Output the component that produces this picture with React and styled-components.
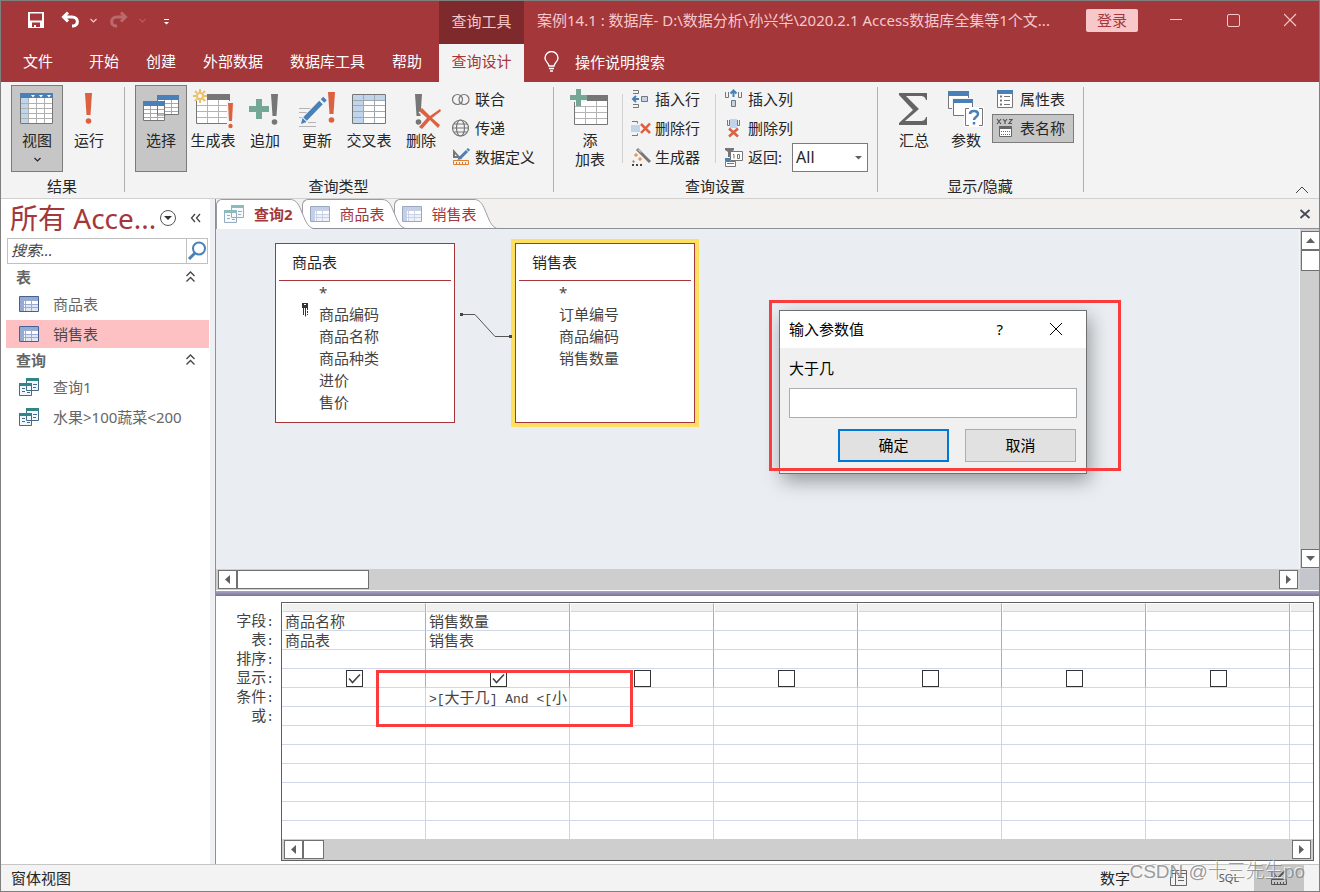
import React, { useState } from 'react';
import styled, { createGlobalStyle, ThemeProvider } from 'styled-components';

const theme = {
  colours: {
    brand: '#a4373a',
    brandDark: '#7e2a2d',
    blush: '#f8c7ca',
    ribbon: '#f3f3f3',
    canvas: '#eaeef2',
    pressed: '#c6c6c6',
    outline: '#7b7b7b',
    ink: '#262626',
    muted: '#666666',
    mark: '#fb3c3c',
  },
};

const GlobalStyle = createGlobalStyle`
  * {
    box-sizing: border-box;
  }

  body {
    margin: 0;
    font-family: 'Noto Sans', 'Noto Sans CJK SC', sans-serif;
    font-size: 15px;
    line-height: 20px;
    color: #262626;
  }

  button, input, select {
    font: inherit;
    color: inherit;
    margin: 0;
    padding: 0;
    border-radius: 0;
  }

  button {
    border: 0;
    background: none;
    white-space: nowrap;
  }

  svg {
    display: block;
    flex: none;
  }

  ul {
    list-style: none;
    margin: 0;
    padding: 0;
  }
`;

const Window = styled.div`
  display: flex;
  flex-direction: column;
  min-height: 100vh;
  border: 1px solid #808080;
  background: #fff;
`;

/* ---------- title bar and menu ---------- */

const TitleBar = styled.header`
  display: flex;
  align-items: center;
  height: 43px;
  padding-bottom: 5px;
  background: ${(props) => props.theme.colours.brand};
  color: ${(props) => props.theme.colours.blush};
`;

const QuickAccess = styled.div`
  display: flex;
  align-items: center;
  gap: 10px;
  flex: none;
  width: 438px;
  padding-left: 26px;
`;

const QuickPair = styled.div`
  display: flex;
  align-items: center;
  gap: 8px;
  opacity: ${(props) => (props.$faded ? 0.25 : 1)};
`;

const ContextCap = styled.div`
  flex: none;
  width: 85px;
  height: 43px;
  margin-bottom: -5px;
  line-height: 40px;
  text-align: center;
  background: ${(props) => props.theme.colours.brandDark};
`;

const Title = styled.h1`
  flex: 1;
  min-width: 0;
  margin: 0;
  padding-left: 13px;
  font-size: 15px;
  font-weight: 400;
  white-space: nowrap;
  overflow: hidden;
`;

const LoginButton = styled.button`
  width: 52px;
  height: 23px;
  margin: 0 10px 0 26px;
  border-radius: 2px;
  background: ${(props) => props.theme.colours.blush};
  color: ${(props) => props.theme.colours.brand};
`;

const WindowButton = styled.button`
  display: flex;
  justify-content: center;
  width: 57px;
`;

const MenuBar = styled.nav`
  display: flex;
  height: 38px;
  background: ${(props) => props.theme.colours.brand};
  color: #fff;
`;

const MenuItems = styled.div`
  display: flex;
  gap: 1px;
  flex: none;
  width: 438px;
`;

const MenuButton = styled.button`
  padding: 0 ${(props) => (props.$wide ? 22 : 13)}px 4px;
`;

const ActiveTab = styled.button`
  width: 85px;
  padding-bottom: 4px;
  background: ${(props) => props.theme.colours.ribbon};
  color: ${(props) => props.theme.colours.brand};
`;

const TellMe = styled.button`
  display: flex;
  align-items: center;
  gap: 13px;
  padding: 0 0 2px 18px;
`;

/* ---------- ribbon ---------- */

const Ribbon = styled.div`
  display: flex;
  height: 117px;
  border-bottom: 1px solid #d2d0ce;
  background: ${(props) => props.theme.colours.ribbon};
`;

const Group = styled.section`
  display: flex;
  flex-direction: column;
  padding: 3px 9px 0 10px;
`;

const GroupBody = styled.div`
  display: flex;
  height: 87px;
`;

const GroupName = styled.div`
  margin: 4px 2px 0 0;
  text-align: center;
`;

const GroupLine = styled.div`
  width: 1px;
  margin: 5px 0 6px;
  background: #b1b1b1;
`;

const InnerLine = styled.div`
  width: 1px;
  margin: 9px 4px 9px 6px;
  background: #d0d0d0;
`;

const BigButton = styled.button`
  display: flex;
  flex-direction: column;
  align-items: center;
  width: 52px;
  height: 87px;
  padding-top: 3px;
  border: 1px solid ${(props) => (props.$pressed ? props.theme.colours.outline : 'transparent')};
  background: ${(props) => (props.$pressed ? props.theme.colours.pressed : 'transparent')};
  line-height: 19px;
  white-space: pre;

  > svg:first-child {
    margin-bottom: 2px;
  }

  > svg + svg {
    margin-top: 7px;
  }
`;

const SmallColumn = styled.div`
  display: flex;
  flex-direction: column;
  align-items: flex-start;
`;

const SmallButton = styled.button`
  display: flex;
  align-items: center;
  gap: 4px;
  height: 29px;
  padding: 0 8px 2px 3px;
  border: 1px solid ${(props) => (props.$pressed ? props.theme.colours.outline : 'transparent')};
  background: ${(props) => (props.$pressed ? props.theme.colours.pressed : 'transparent')};
`;

const ReturnRow = styled.div`
  display: flex;
  align-items: center;
  height: 29px;
  padding-left: 4px;
`;

const ReturnLabel = styled.label`
  display: flex;
  align-items: center;
  gap: 4px;
  width: 68px;
  padding-bottom: 2px;
  white-space: nowrap;
`;

const SelectBox = styled.div`
  display: grid;
  align-items: center;
  width: 76px;

  > * {
    grid-area: 1 / 1;
  }

  > svg {
    justify-self: end;
    margin-right: 5px;
    pointer-events: none;
  }
`;

const Select = styled.select`
  width: 100%;
  height: 29px;
  padding: 0 0 2px 3px;
  border: 1px solid ${(props) => props.theme.colours.outline};
  background: #fff;
  font-size: 16px;
  appearance: none;
`;

const CollapseButton = styled.button`
  align-self: flex-end;
  margin: 0 10px 4px auto;
`;

/* ---------- navigation pane ---------- */

const Workspace = styled.main`
  display: flex;
  flex: 1;
`;

const NavPane = styled.aside`
  flex: none;
  width: 209px;
  color: ${(props) => props.theme.colours.muted};
`;

const NavHeader = styled.div`
  display: flex;
  align-items: center;
  height: 38px;
  padding: 0 9px;
`;

const NavTitle = styled.h2`
  flex: 1;
  margin: 0;
  font-size: 28px;
  line-height: 36px;
  font-weight: 400;
  white-space: nowrap;
  color: ${(props) => props.theme.colours.brand};
`;

const NavHeaderButton = styled.button`
  margin-left: ${(props) => (props.$apart ? 13 : 0)}px;
`;

const SearchBox = styled.form`
  display: flex;
  height: 26px;
  margin: 1px 2px 1px 6px;
  border: 1px solid #c0c0c0;
`;

const SearchInput = styled.input`
  flex: 1;
  min-width: 0;
  padding: 0 0 2px 3px;
  border: 0;
  background: #fff;

  &::placeholder {
    font-style: italic;
    color: #444;
    opacity: 1;
  }
`;

const SearchButton = styled.button`
  width: 21px;
  border-left: 1px solid #c0c0c0;
`;

const SectionHead = styled.h3`
  display: flex;
  align-items: center;
  justify-content: space-between;
  height: 25px;
  margin: 0;
  padding: 0 14px 1px 15px;
  font-size: 15px;
  font-weight: 700;
`;

const NavList = styled.ul`
  display: grid;
  gap: 2px;
  padding: 0 1px 0 5px;
`;

const NavLink = styled.a`
  display: flex;
  align-items: center;
  gap: 14px;
  height: 28px;
  padding-left: 13px;
  color: ${(props) => (props.$selected ? '#4a4a4a' : 'inherit')};
  background: ${(props) => (props.$selected ? '#fdc1c4' : 'transparent')};
  text-decoration: none;
  white-space: nowrap;
`;

const PaneSplitter = styled.div`
  flex: none;
  width: 6px;
  border-right: 1px solid #8f909a;
  background: #eff0f3;
`;

/* ---------- document area ---------- */

const Document = styled.div`
  display: flex;
  flex-direction: column;
  flex: 1;
  min-width: 0;
`;

const TabStrip = styled.div`
  display: flex;
  height: 30px;
  border-bottom: 1px solid #8f8f97;
  background: #f3f1f0;
`;

const DocTab = styled.button`
  position: relative;
  z-index: ${(props) => props.$order};
  display: flex;
  height: 30px;
  margin-right: -11px;
  color: ${(props) => props.theme.colours.brand};
  font-weight: ${(props) => (props.$current ? 700 : 400)};
`;

const TabBody = styled.span`
  display: flex;
  align-items: center;
  gap: 10px;
  height: ${(props) => (props.$current ? 30 : 29)}px;
  padding: 0 0 ${(props) => (props.$current ? 2 : 0)}px 7px;
  border: 1px solid #9a9aa2;
  border-width: 1px 0 0 1px;
  border-top-left-radius: 6px;
  background: #fff;
`;

const TabLabel = styled.span`
  position: relative;
  z-index: 1;
  margin-right: -4px;
`;

const CloseTab = styled.button`
  margin: 0 8px 0 auto;
`;

const CanvasRow = styled.div`
  display: flex;
  flex: 1;
  min-height: 340px;
`;

const Canvas = styled.div`
  position: relative;
  flex: 1;
  background: ${(props) => props.theme.colours.canvas};
`;

const FieldList = styled.section`
  position: absolute;
  left: ${(props) => props.$x}px;
  top: 14px;
  width: 180px;
  height: 180px;
  padding: 0 3px;
  border: 1px solid ${(props) => props.theme.colours.brand};
  background: #fff;
  color: #444;
  box-shadow: ${(props) => (props.$selected ? '0 0 0 4px #ffdf60' : 'none')};
`;

const FieldListName = styled.h4`
  height: 37px;
  margin: 0;
  padding-left: 13px;
  border-bottom: 1px solid ${(props) => props.theme.colours.brand};
  font-size: 15px;
  font-weight: 400;
  line-height: 37px;
  color: ${(props) => props.theme.colours.ink};
`;

const Field = styled.li`
  display: grid;
  grid-template-columns: 17px 1fr;
  align-items: center;
  height: 22px;
  padding-left: 23px;

  > span {
    grid-column: 2;
    grid-row: 1;
  }

  > svg {
    grid-row: 1;
    align-self: start;
  }
`;

const Relation = styled.svg`
  position: absolute;
  left: 243px;
  top: 82px;
`;

const Dialog = styled.div`
  position: absolute;
  left: 563px;
  top: 81px;
  width: 308px;
  border: 1px solid #6d7073;
  background: #f0f0f0;
  color: #000;
  box-shadow: 3px 7px 18px rgba(0, 0, 0, 0.36);
`;

const DialogTitle = styled.div`
  display: flex;
  align-items: center;
  height: 37px;
  padding: 0 23px 1px 9px;
  background: #fff;

  > span {
    flex: 1;
  }
`;

const DialogButton = styled.button`
  margin-left: ${(props) => (props.$apart ? 46 : 0)}px;
`;

const DialogForm = styled.form`
  display: grid;
  padding: 10px 9px 11px;
`;

const ParamInput = styled.input`
  width: 100%;
  height: 30px;
  margin-top: 10px;
  padding: 0 6px;
  border: 1px solid #abadb3;
  background: #fff;
`;

const DialogActions = styled.div`
  display: flex;
  justify-content: flex-end;
  gap: 16px;
  margin-top: 11px;
  padding-right: 1px;
`;

const PushButton = styled.button`
  width: 111px;
  height: 33px;
  padding-bottom: 2px;
  border: ${(props) => (props.$primary ? '2px solid #0078d7' : '1px solid #adadad')};
  background: #e1e1e1;
`;

const Mark = styled.div`
  position: absolute;
  z-index: 5;
  left: ${(props) => props.$x}px;
  top: ${(props) => props.$y}px;
  width: ${(props) => props.$w}px;
  height: ${(props) => props.$h}px;
  border: 3px solid ${(props) => props.theme.colours.mark};
  pointer-events: none;
`;

/* ---------- scroll bars ---------- */

const Bar = styled.div`
  display: flex;
  flex-direction: ${(props) => (props.$vertical ? 'column' : 'row')};
  flex: ${(props) => (props.$grow ? 1 : 'none')};
  padding: ${(props) => (props.$vertical ? '2px 0 1px 1px' : '1px 2px')};
  border: 0 solid #f4f5f7;
  border-left-width: ${(props) => (props.$vertical ? 1 : 0)}px;
  background: #cecece;
`;

const Arrow = styled.button`
  display: flex;
  align-items: center;
  justify-content: center;
  width: ${(props) => (props.$vertical ? 18 : 19)}px;
  height: 19px;
  margin-left: ${(props) => (props.$end && !props.$vertical ? 'auto' : 0)};
  margin-top: ${(props) => (props.$end && props.$vertical ? 'auto' : 0)};
  border: 1px solid #707070;
  border-right-width: ${(props) => (props.$vertical ? 0 : 1)}px;
  background: #fff;
`;

const Thumb = styled.div`
  width: ${(props) => (props.$vertical ? 18 : props.$size)}px;
  height: ${(props) => (props.$vertical ? props.$size : 19)}px;
  border: 1px solid #707070;
  border-right-width: ${(props) => (props.$vertical ? 0 : 1)}px;
  background: #fff;
`;

const BarRow = styled.div`
  display: flex;
  height: 21px;
`;

const BarCorner = styled.div`
  width: 19px;
  background: #c5c6cb;
`;

const PaneDivider = styled.div`
  height: 5px;
  margin-top: 1px;
  background: linear-gradient(#a9a7c4, #77749b);
`;

/* ---------- design grid ---------- */

const DesignPane = styled.div`
  position: relative;
  display: flex;
  gap: 7px;
  padding: 6px 5px 3px 0;
  font-family: 'Noto Sans CJK SC', sans-serif;
  color: #444;
`;

const RowNames = styled.ul`
  flex: none;
  width: 58px;
  padding-top: 8px;
  text-align: right;
  line-height: 19px;

  > li {
    height: 19px;
  }
`;

const GridFrame = styled.div`
  flex: 1;
  min-width: 0;
  overflow: hidden;
  border: 1px solid #606060;
`;

const Grid = styled.table`
  width: 1152px;
  table-layout: fixed;
  border-collapse: separate;
  border-spacing: 0;
`;

const ColumnTop = styled.th`
  width: 144px;
  height: 9px;
  padding: 0;
  border: 1px solid #fff;
  border-right-color: #aeaeb2;
  border-bottom-color: #d3d5e2;
  background: #f0f0f0;
`;

const Cell = styled.td`
  height: ${(props) => (props.$last ? 18 : 19)}px;
  padding: 0 0 0 3px;
  border: 0 solid #cfd8e6;
  border-right: 1px solid ${(props) => (props.$upper ? '#aeaeb2' : '#d0d4e2')};
  border-bottom-width: ${(props) => (props.$last ? 0 : 1)}px;
  line-height: 17px;
  vertical-align: top;
  white-space: nowrap;
`;

const Latin = styled.span`
  font-family: 'Liberation Mono', monospace;
  font-size: 13px;
  line-height: 1;
`;

const CheckBox = styled.input`
  display: block;
  width: 17px;
  height: 17px;
  margin: 0 auto;
  border: 1px solid #333;
  appearance: none;
  background: #fff;
`;

const CheckWrap = styled.div`
  display: grid;
  justify-items: center;
  padding-top: 1px;
  margin-left: -2px;

  > * {
    grid-area: 1 / 1;
  }

  > svg {
    pointer-events: none;
  }
`;

/* ---------- status bar ---------- */

const StatusBar = styled.footer`
  position: relative;
  display: flex;
  height: 27px;
  padding: 0 15px 0 10px;
  border-top: 1px solid #c6c6c6;
  background: ${(props) => props.theme.colours.ribbon};
  line-height: 26px;
`;

const StatusText = styled.span`
  flex: 1;
`;

const ViewButton = styled.button`
  display: flex;
  align-items: center;
  justify-content: center;
  width: 50px;
  background: ${(props) => (props.$pressed ? '#c5c5c5' : 'transparent')};
  font-size: 11px;
  color: #555;
`;

const NumLock = styled.span`
  margin-right: 24px;
`;

const Watermark = styled.div`
  position: absolute;
  right: 14px;
  top: -7px;
  font-family: 'Liberation Sans', 'Noto Sans CJK SC', sans-serif;
  font-size: 19px;
  line-height: 28px;
  font-weight: 300;
  white-space: nowrap;
  color: rgba(130, 130, 130, 0.8);
  text-shadow: -1px -1px 0 rgba(255, 255, 255, 0.8);
  pointer-events: none;
`;

/* ---------- icons ---------- */

const BLUE = '#4a80b8';
const PALE = '#c0d5ea';
const RED = '#dc6141';
const GREEN = '#74a795';
const GREY = '#767676';

const Big = ({ children }) => (
  <svg width="44" height="40" viewBox="0 0 44 40" fill="none">{children}</svg>
);

const Small = ({ children }) => (
  <svg width="20" height="20" viewBox="0 0 20 20" fill="none">{children}</svg>
);

const Bang = ({ x, y, fill = RED, h = 31 }) => (
  <g fill={fill}>
    <path d={`M${x} ${y}h7l-1.5 ${h - 9}h-4z`} />
    <circle cx={x + 3.5} cy={y + h - 3} r="2.8" />
  </g>
);

const ViewIcon = () => (
  <Big>
    <path fill="#fff" d="M5 4h33v31H5z" />
    <path fill={PALE} d="M6 9h8v25H6z" />
    <path stroke="#b0b0b0" d="M13.5 9v25M21.5 9v25M29.5 9v25M6 14.5h32M6 19.5h32M6 24.5h32M6 29.5h32" />
    <path stroke={GREY} d="M5.5 4.500h32v30h-32z" />
    <path fill={BLUE} d="M5 4h33v5H5z" />
    <path fill="#fff" d="M16 6h4l-2 2.500zM24 6h4l-2 2.500zM32 6h4l-2 2.500z" />
  </Big>
);

const RunIcon = () => (
  <Big><Bang x={18} y={4} /></Big>
);

const MiniTable = ({ x, y }) => (
  <g transform={`translate(${x} ${y})`}>
    <path fill="#fff" stroke={GREY} d="M.5.5h21v19H.5z" />
    <path stroke="#a8a8a8" d="M7.5 5v14M14.500 5v14M1 8.500h20M1 12.500h20M1 16.500h20" />
    <path fill={BLUE} d="M0 0h22v5H0z" />
  </g>
);

const SelectIcon = () => (
  <Big>
    <MiniTable x={18} y={6} />
    <MiniTable x={4} y={12} />
    <path stroke={GREY} d="M18.500 17v9h8" />
  </Big>
);

const GreyTable = ({ x, y, cut }) => (
  <g transform={`translate(${x} ${y})`}>
    <path fill="#fff" stroke={GREY} d="M.5.5h33v29H.5z" />
    <path stroke="#b4b4b4" d="M11.500 6v23M22.500 6v23M1 11.500h32M1 17.500h32M1 23.500h32" />
    <path fill={GREY} d="M0 0h34v6H0z" />
    <path fill="#f3f3f3" d={`M-2 -2h${cut + 2}v9H-2z`} />
  </g>
);

const MakeTableIcon = () => (
  <Big>
    <GreyTable x={5} y={5} cut={11} />
    <g stroke="#edbf68" strokeWidth="2">
      <path d="M9 0v3M9 11v3M2 7h3M13 7h3M4 2l2 2M12 10l2 2M14 2l-2 2M4 12l2-2" />
      <circle cx="9" cy="7" r="3" fill="#fff" />
    </g>
    <path fill="#f3f3f3" d="M36 12h8v28h-8z" />
    <g fill={RED}>
      <path d="M37 14h5l-1 18h-3z" />
      <circle cx="39.500" cy="37" r="2.200" />
    </g>
  </Big>
);

const AppendIcon = () => (
  <Big>
    <path stroke={GREEN} strokeWidth="6" d="M16 10v20M6 20h20" />
    <Bang x={28} y={5} fill={GREY} />
  </Big>
);

const UpdateIcon = () => (
  <Big>
    <path stroke="#b4b4b4" d="M4 19.500h17M4 23.500h13M4 28.500h8M12 33.500h9M4 37.500h17" />
    <path stroke="#f3f3f3" strokeWidth="8" d="M9 32l21-22" />
    <path stroke={BLUE} strokeWidth="5" d="M10 30l16-16.500M27.500 12l2.500-2.500" />
    <path fill={BLUE} d="M6 35l1.500-6 4 4z" />
    <Bang x={33} y={3} />
  </Big>
);

const CrosstabIcon = () => (
  <Big>
    <path fill="#fff" d="M5 5h34v30H5z" />
    <path fill={PALE} d="M6 6h32v5H6zM6 11h10v23H6z" />
    <path stroke="#a0a8b0" d="M16.500 6v28M27.500 6v28M6 11.500h32M6 16.500h32M6 22.500h32M6 28.500h32" />
    <path stroke={GREY} d="M5.500 5.500h33v29h-33z" />
  </Big>
);

const DeleteIcon = () => (
  <Big>
    <Bang x={16} y={5} fill={GREY} />
    <path stroke="#f3f3f3" strokeWidth="7" d="M22 21l18 18M41 22L22 39" />
    <path fill={RED} d="M20 22l3-3 8 8 10-7 1 2-9 7 8 7-2 3-8-8-8 9-3-2 8-9z" />
  </Big>
);

const AddTableIcon = () => (
  <Big>
    <GreyTable x={6} y={6} cut={13} />
    <path fill="#fff" d="M7 18h10v-6h6v5h-6v5H7z" />
    <path stroke={GREY} d="M6.500 17v18" />
    <path stroke="#b4b4b4" d="M7 17.500h16M17.500 18v6" />
    <path stroke={GREEN} strokeWidth="5" d="M10.500 0v17M2 8.500h17" />
  </Big>
);

const SumIcon = () => (
  <Big>
    <path fill="#646464" d="M7 4h28v7h-1c-1-3-2-4-6-4H14l13 13-14 12h15c4 0 5-1 6-4h1v8H7v-2l14-13L7 6z" />
  </Big>
);

const ParamIcon = () => (
  <Big>
    <path fill="#fff" stroke={GREY} d="M4.500 2.500h20v17h-20z" />
    <path fill={BLUE} d="M4 2h21v5H4z" />
    <path fill="#f3f3f3" d="M8 9h22v19H8z" />
    <path fill="#fff" stroke={GREY} d="M9.500 10.500h19v16h-19z" />
    <path fill={BLUE} d="M9 10h20v4H9z" />
    <path fill="#fff" d="M20 18h20v20H20z" />
    <path stroke={GREY} d="M25 19.500h-3.500v17H25M35 19.500h3.500v17H35" />
    <path stroke={BLUE} strokeWidth="2.500" d="M26 25c0-4 8-4 8 0 0 3-4 3-4 6M30 33v2.500" />
  </Big>
);

const UnionIcon = () => (
  <Small>
    <g stroke={GREY} strokeWidth="1.200">
      <circle cx="6.500" cy="10.500" r="5" />
      <circle cx="13" cy="10.500" r="5" />
    </g>
  </Small>
);

const GlobeIcon = () => (
  <Small>
    <g stroke={GREY} strokeWidth="1.200">
      <circle cx="9.500" cy="10" r="8" />
      <ellipse cx="9.500" cy="10" rx="4" ry="8" />
      <path d="M1.500 10h16M3 6h13M3 14h13" />
    </g>
  </Small>
);

const DefineIcon = () => (
  <Small>
    <path fill={GREY} fillRule="evenodd" d="M2 2l8 9H2zM4 7v2h2z" />
    <path stroke={BLUE} strokeWidth="3" d="M9 11l7-7M16.500 3.500L18 2" />
    <path fill={BLUE} d="M6.500 13l1.500-4 3 3z" />
    <path stroke="#e07f2e" d="M2.500 13.500h15v4h-15zM5.500 15v2M8.500 15v2M11.500 15v2M14.500 15v2" />
  </Small>
);

const InsertRowIcon = () => (
  <Small>
    <path stroke={GREY} d="M2 1.500h5.500v3H2M2 18.500h5.500v-3H2" />
    <path fill={PALE} stroke={GREY} d="M10.500 7.500h6v5h-6z" />
    <path stroke={BLUE} strokeWidth="2" d="M2 10h6M5 7l-3 3 3 3" />
  </Small>
);

const DeleteRowIcon = () => (
  <Small>
    <path stroke={GREY} d="M1 3.500h5.500v2M1 17.500h5.500v-2" />
    <path fill={PALE} d="M0 7h9v7H0z" />
    <path stroke={RED} strokeWidth="2.500" d="M10 6l9 9M19 5.500L10 15" />
  </Small>
);

const WandIcon = () => (
  <Small>
    <path stroke={GREY} strokeWidth="3" d="M6 2l13 13" />
    <path stroke="#fff" d="M7 2.500l3 3" />
    <path fill="#e07f2e" d="M5 6l2 2-2 2-2-2zM9 10l2 2-2 2-2-2zM2.500 13l1.500 1.500L2.500 16 1 14.500z" />
    <path fill="#f3f3f3" d="M5 7.300l.7.7-.7.700-.7-.7zM9 11.300l.7.7-.7.700-.7-.7z" />
    <path stroke="#444" strokeWidth="2" strokeDasharray="2 2" d="M1 18h10" />
  </Small>
);

const InsertColumnIcon = () => (
  <Small>
    <path stroke={GREY} d="M1.500 3v5.500h3V3M14.500 3v5.500h3V3" />
    <path fill={PALE} stroke={GREY} d="M7.500 11.500h4v6h-4z" />
    <path stroke={BLUE} strokeWidth="2" d="M9.500 1v7M6.500 4.500l3-3 3 3" />
  </Small>
);

const DeleteColumnIcon = () => (
  <Small>
    <path fill={PALE} d="M6 1h7v9H6z" />
    <path stroke={GREY} d="M3.500 2v5.500h2V2M13.500 2v5.500h2V2" />
    <path stroke={RED} strokeWidth="2.500" d="M5 10.500l9 8M14 10.500l-9 8" />
  </Small>
);

const ReturnIcon = () => (
  <Small>
    <path fill={GREY} d="M1 1h9v2L7 5v5H4V5L1 3z" />
    <path fill={BLUE} d="M1 11h5v3H1z" />
    <path fill="#fff" stroke={GREY} d="M1.500 14.500h10v5h-10zM6.500 4.500h12v9h-12z" />
    <path stroke={GREY} d="M3 16.500h7M9 7.500h1v4M13.500 7.500h2v4h-2z" />
  </Small>
);

const PropertyIcon = () => (
  <Small>
    <path fill="#fff" stroke={GREY} d="M1.500 1.500h15v17h-15z" />
    <path fill={BLUE} d="M1 1h16v4H1z" />
    <path stroke={GREY} d="M8 7.500h6M8 11.500h6M8 15.500h6" />
    <path stroke={GREY} strokeWidth="2" d="M4 7.500h2M4 11.500h2M4 15.500h2" />
  </Small>
);

const TableNamesIcon = () => (
  <Small>
    <path stroke="#555" strokeWidth="1.200" d="M1 1l4 5M5 1L1 6M7 1l2 2.500L11 1M9 3.500V6M13 1.500h3L13 5.500h3" />
    <path fill="#fff" stroke="#666" d="M3.500 8.500h12v10h-12z" />
    <path fill="#666" d="M3 8h13v3H3z" />
    <path stroke="#666" strokeDasharray="1 1" d="M5 13.500h9M5 16.500h9" />
  </Small>
);

const Chevron = () => (
  <svg width="9" height="5" viewBox="0 0 9 5" fill="none" stroke="currentColor" strokeWidth="1.200">
    <path d="M1.500 1l3 3 3-3" />
  </svg>
);

const DoubleChevron = ({ left }) => (
  <svg width="11" height="12" viewBox="0 0 11 12" fill="none" stroke="#444" strokeWidth="1.300">
    <path d={left ? 'M5 2L1.500 6 5 10M10 2L6.500 6 10 10' : 'M1.500 5l4-4 4 4M1.500 10.500l4-4 4 4'} />
  </svg>
);

const Triangle = ({ d }) => (
  <svg width="9" height="9" viewBox="0 0 9 9" fill="#606060">
    <path d={d} />
  </svg>
);

const LEFT = 'M7 0v9L2 4.500z';
const RIGHT = 'M2 0v9l5-4.500z';
const UP = 'M0 7h9L4.500 2z';
const DOWN = 'M0 2h9L4.500 7z';

const TableGlyph = ({ faded }) => (
  <svg width="20" height="16" viewBox="0 0 20 16" fill="none" opacity={faded ? 0.55 : 1}>
    <path fill="#fff" d="M0 0h20v16H0z" />
    <path fill="#dfe6f5" d="M7 9h12v6H7z" />
    <path fill="#93a9d6" d="M1 1h18v3H1zM1 4h4v11H1z" />
    <path stroke="#9cacd0" d="M6.500 1v14M12.500 1v14M1 4.500h18M1 8.500h18M1 11.500h18" />
    <path stroke="#48608f" d="M.5.5h19v15H.5z" />
  </svg>
);

const QueryGlyph = ({ faded }) => (
  <svg width="20" height="18" viewBox="0 0 20 18" fill="none" opacity={faded ? 0.55 : 1}>
    <path fill="#f2f7fc" stroke="#45698c" d="M7.500.5h12v12h-12z" />
    <path fill="#2f8587" d="M7 0h13v3H7z" />
    <path fill="#f2f7fc" stroke="#45698c" d="M.5 5.500h12v12H.5z" />
    <path fill="#2f8587" d="M0 5h13v3H0z" />
    <path stroke="#45698c" d="M7.500 8v4.500h5M3 10.500h3M3 13.500h3M8 14.500h3M14 6.500h4M14 9.500h3" />
  </svg>
);

const KeyGlyph = () => (
  <svg width="8" height="14" viewBox="0 0 8 14" fill="#333">
    <path fillRule="evenodd" d="M0 0h6v5H4v9L3 13V5H0zM2 1v1h2V1z" />
    <path d="M5 5h1v2H5zM5 8h1v2H5zM5 11h1v1H5zM1 5h1v7H1z" />
  </svg>
);

const TabSlope = ({ current }) => (
  <svg width="24" height="30" viewBox="0 0 24 30" fill="none">
    <path fill="#fff" d={`M0 0h1c7 0 9 6 12 13s6 14 11 16v${current ? 1 : 0}H0z`} />
    <path stroke="#9a9aa2" d="M0 .5h1c7 0 9 6 12 13s5 14 11 16" />
  </svg>
);

/* ---------- data ---------- */

const menuItems = ['开始', '创建', '外部数据', '数据库工具', '帮助'];

const queryTypes = [
  { name: '选择', Icon: SelectIcon, pressed: true },
  { name: '生成表', Icon: MakeTableIcon },
  { name: '追加', Icon: AppendIcon },
  { name: '更新', Icon: UpdateIcon },
  { name: '交叉表', Icon: CrosstabIcon },
  { name: '删除', Icon: DeleteIcon },
];

const sqlTypes = [
  { name: '联合', Icon: UnionIcon },
  { name: '传递', Icon: GlobeIcon },
  { name: '数据定义', Icon: DefineIcon },
];

const rowTools = [
  { name: '插入行', Icon: InsertRowIcon },
  { name: '删除行', Icon: DeleteRowIcon },
  { name: '生成器', Icon: WandIcon },
];

const columnTools = [
  { name: '插入列', Icon: InsertColumnIcon },
  { name: '删除列', Icon: DeleteColumnIcon },
];

const showTools = [
  { name: '属性表', Icon: PropertyIcon },
  { name: '表名称', Icon: TableNamesIcon, pressed: true },
];

const navSections = [
  { name: '表', Glyph: TableGlyph, items: ['商品表', '销售表'] },
  { name: '查询', Glyph: QueryGlyph, items: ['查询1', '水果>100蔬菜<200'] },
];

const docTabs = [
  { name: '查询2', Glyph: QueryGlyph },
  { name: '商品表', Glyph: TableGlyph },
  { name: '销售表', Glyph: TableGlyph },
];

const sources = [
  { name: '商品表', x: 59, key: '商品编码', fields: ['*', '商品编码', '商品名称', '商品种类', '进价', '售价'] },
  { name: '销售表', x: 299, selected: true, fields: ['*', '订单编号', '商品编码', '销售数量'] },
];

const rowNames = ['字段:', '表:', '排序:', '显示:', '条件:', '或:'];

const gridColumns = [
  { 0: '商品名称', 1: '商品表' },
  { 0: '销售数量', 1: '销售表', 4: '>[大于几] And <[小' },
  {}, {}, {}, {}, {}, {},
];

const SHOW_ROW = 3;
const ROW_COUNT = 12;

const splitScripts = (text) =>
  text.split(/([\x20-\x7e]+)/).map((part, i) => (i % 2 ? <Latin key={i}>{part}</Latin> : part));

/* ---------- parts ---------- */

const ToolColumn = ({ tools, children }) => (
  <SmallColumn>
    {tools.map(({ name, Icon, pressed }) => (
      <SmallButton key={name} type="button" $pressed={pressed}>
        <Icon />
        {name}
      </SmallButton>
    ))}
    {children}
  </SmallColumn>
);

const RibbonGroup = ({ name, children }) => (
  <>
    <Group>
      <GroupBody>{children}</GroupBody>
      <GroupName>{name}</GroupName>
    </Group>
    <GroupLine />
  </>
);

const Header = () => (
  <>
    <TitleBar>
      <QuickAccess>
        <button type="button" aria-label="保存">
          <svg width="22" height="18" viewBox="0 0 22 18" fill="none">
            <path fill="#fff" fillRule="evenodd" d="M1 1h16v16H1zM3 2.500v7h12v-7zM5 11.500V16h2v-2h2v2h4v-4.500z" />
          </svg>
        </button>
        <QuickPair>
          <svg width="22" height="18" viewBox="0 0 22 18" fill="none" stroke="#fff" strokeWidth="3">
            <path d="M9 1.500L4.500 6 9 10.500M5 6h8c7 0 7 9 1 9h-1" />
          </svg>
          <Chevron />
        </QuickPair>
        <QuickPair $faded>
          <svg width="22" height="18" viewBox="0 0 22 18" fill="none" stroke="#fff" strokeWidth="3">
            <path d="M13 1.500L17.500 6 13 10.500M17 6H9c-7 0-7 9-1 9h1" />
          </svg>
          <Chevron />
        </QuickPair>
        <svg width="20" height="12" viewBox="0 0 20 12" fill="#fff">
          <path d="M7 5h5v1H7zM7 8h5L9.500 10.500z" />
        </svg>
      </QuickAccess>
      <ContextCap>查询工具</ContextCap>
      <Title>案例14.1 : 数据库- D:\数据分析\孙兴华\2020.2.1 Access数据库全集等1个文...</Title>
      <LoginButton type="button">登录</LoginButton>
      <WindowButton type="button" aria-label="最小化">
        <svg width="14" height="14" stroke="#f8c7ca"><path d="M0 6.500h12" /></svg>
      </WindowButton>
      <WindowButton type="button" aria-label="最大化">
        <svg width="14" height="14" fill="none" stroke="#f8c7ca"><rect x=".5" y="1.500" width="12" height="12" rx="1.500" /></svg>
      </WindowButton>
      <WindowButton type="button" aria-label="关闭">
        <svg width="14" height="14" stroke="#f8c7ca" strokeWidth="1.200"><path d="M0 1l12 12M12 1L0 13" /></svg>
      </WindowButton>
    </TitleBar>
    <MenuBar>
      <MenuItems>
        <MenuButton type="button" $wide>文件</MenuButton>
        {menuItems.map((item) => (
          <MenuButton key={item} type="button">{item}</MenuButton>
        ))}
      </MenuItems>
      <ActiveTab type="button">查询设计</ActiveTab>
      <TellMe type="button">
        <svg width="20" height="22" viewBox="0 0 20 22" fill="none" stroke="#fff" strokeWidth="1.400">
          <path d="M7 15c0-3-4-4-4-8a6.500 6.500 0 0 1 13 0c0 4-4 5-4 8zM7 17.500h5M8 20h3" />
        </svg>
        操作说明搜索
      </TellMe>
    </MenuBar>
  </>
);

const RibbonBar = () => (
  <Ribbon>
    <RibbonGroup name="结果">
      <BigButton type="button" $pressed>
        <ViewIcon />
        视图
        <Chevron />
      </BigButton>
      <BigButton type="button">
        <RunIcon />
        运行
      </BigButton>
    </RibbonGroup>
    <RibbonGroup name="查询类型">
      {queryTypes.map(({ name, Icon, pressed }) => (
        <BigButton key={name} type="button" $pressed={pressed}>
          <Icon />
          {name}
        </BigButton>
      ))}
      <ToolColumn tools={sqlTypes} />
    </RibbonGroup>
    <RibbonGroup name="查询设置">
      <BigButton type="button">
        <AddTableIcon />
        {'添\n加表'}
      </BigButton>
      <InnerLine />
      <ToolColumn tools={rowTools} />
      <InnerLine />
      <ToolColumn tools={columnTools}>
        <ReturnRow>
          <ReturnLabel htmlFor="return-rows">
            <ReturnIcon />
            返回:
          </ReturnLabel>
          <SelectBox>
            <Select id="return-rows" defaultValue="All">
              <option>All</option>
              <option>5</option>
              <option>25</option>
              <option>100</option>
            </Select>
            <svg width="8" height="4" fill="#606060"><path d="M0 0h7L3.500 3.500z" /></svg>
          </SelectBox>
        </ReturnRow>
      </ToolColumn>
    </RibbonGroup>
    <RibbonGroup name="显示/隐藏">
      <BigButton type="button">
        <SumIcon />
        汇总
      </BigButton>
      <BigButton type="button">
        <ParamIcon />
        参数
      </BigButton>
      <ToolColumn tools={showTools} />
    </RibbonGroup>
    <CollapseButton type="button" aria-label="折叠功能区">
      <svg width="14" height="8" fill="none" stroke="#444">
        <path d="M1 7l6-6 6 6" />
      </svg>
    </CollapseButton>
  </Ribbon>
);

const Navigation = () => (
  <NavPane>
    <NavHeader>
      <NavTitle>所有 Acce...</NavTitle>
      <NavHeaderButton type="button" aria-label="筛选">
        <svg width="18" height="18" viewBox="0 0 18 18" fill="none">
          <circle cx="9" cy="9" r="7.500" stroke="#555" />
          <path fill="#333" d="M5 7h8l-4 4z" />
        </svg>
      </NavHeaderButton>
      <NavHeaderButton type="button" aria-label="收起" $apart>
        <DoubleChevron left />
      </NavHeaderButton>
    </NavHeader>
    <SearchBox>
      <SearchInput type="search" placeholder="搜索..." aria-label="搜索" />
      <SearchButton type="button" aria-label="开始搜索">
        <svg width="20" height="22" viewBox="0 0 20 22" fill="none" stroke={BLUE}>
          <circle cx="12" cy="8.500" r="6" strokeWidth="2" />
          <path strokeWidth="3" d="M8 13l-6 6" />
        </svg>
      </SearchButton>
    </SearchBox>
    {navSections.map(({ name, Glyph, items }) => (
      <React.Fragment key={name}>
        <SectionHead>
          {name}
          <DoubleChevron />
        </SectionHead>
        <NavList>
          {items.map((item) => (
            <li key={item}>
              <NavLink href="#" $selected={item === '销售表'}>
                <Glyph />
                {item}
              </NavLink>
            </li>
          ))}
        </NavList>
      </React.Fragment>
    ))}
  </NavPane>
);

const ParameterDialog = () => (
  <Dialog role="dialog" aria-label="输入参数值">
    <DialogTitle>
      <span>输入参数值</span>
      <DialogButton type="button" aria-label="帮助">?</DialogButton>
      <DialogButton type="button" aria-label="关闭" $apart>
        <svg width="14" height="14" stroke="#000"><path d="M1 1l12 12M13 1L1 13" /></svg>
      </DialogButton>
    </DialogTitle>
    <DialogForm>
      <label htmlFor="param">大于几</label>
      <ParamInput id="param" type="text" />
      <DialogActions>
        <PushButton type="button" $primary>确定</PushButton>
        <PushButton type="button">取消</PushButton>
      </DialogActions>
    </DialogForm>
  </Dialog>
);

const RelationCanvas = () => (
  <Canvas>
    {sources.map(({ name, x, key, selected, fields }) => (
      <FieldList key={name} $x={x} $selected={selected}>
        <FieldListName>{name}</FieldListName>
        <ul>
          {fields.map((field) => (
            <Field key={field}>
              {field === key && <KeyGlyph />}
              <span>{field}</span>
            </Field>
          ))}
        </ul>
      </FieldList>
    ))}
    <Relation width="54" height="32" fill="none">
      <path stroke="#555" d="M2 3.500h14l20 22h16" />
      <path fill="#444" d="M1 2h3v3H1zM50 24h3v3h-3z" />
    </Relation>
    <ParameterDialog />
    <Mark $x={553} $y={71} $w={352} $h={171} />
  </Canvas>
);

const DesignGrid = () => {
  const [shown, setShown] = useState([true, true, false, false, false, false, false, false]);

  const toggle = (index) => {
    setShown(shown.map((value, i) => (i === index ? !value : value)));
  };

  return (
    <DesignPane>
      <RowNames>
        {rowNames.map((name) => (
          <li key={name}>{splitScripts(name)}</li>
        ))}
      </RowNames>
      <GridFrame>
        <Grid>
          <thead>
            <tr>
              {gridColumns.map((column, i) => (
                <ColumnTop key={i} />
              ))}
            </tr>
          </thead>
          <tbody>
            {Array.from({ length: ROW_COUNT }, (_, row) => (
              <tr key={row}>
                {gridColumns.map((column, i) => (
                  <Cell key={i} $upper={row <= SHOW_ROW} $last={row === ROW_COUNT - 1}>
                    {row === SHOW_ROW && i < 7 && (
                      <CheckWrap>
                        <CheckBox
                          type="checkbox"
                          aria-label={`显示 ${i + 1}`}
                          checked={shown[i]}
                          onChange={() => toggle(i)}
                        />
                        {shown[i] && (
                          <svg width="17" height="17" fill="none" stroke="#444" strokeWidth="1.600">
                            <path d="M3 8.500l3.500 4 7.500-8" />
                          </svg>
                        )}
                      </CheckWrap>
                    )}
                    {column[row] && splitScripts(column[row])}
                  </Cell>
                ))}
              </tr>
            ))}
          </tbody>
        </Grid>
        <Bar>
          <Arrow type="button" aria-label="向左"><Triangle d={LEFT} /></Arrow>
          <Thumb $size={21} />
          <Arrow type="button" aria-label="向右" $end><Triangle d={RIGHT} /></Arrow>
        </Bar>
      </GridFrame>
      <Mark $x={160} $y={74} $w={257} $h={57} />
    </DesignPane>
  );
};

const App = () => (
  <ThemeProvider theme={theme}>
    <GlobalStyle />
    <Window>
      <Header />
      <RibbonBar />
      <Workspace>
        <Navigation />
        <PaneSplitter />
        <Document>
          <TabStrip>
            {docTabs.map(({ name, Glyph }, i) => (
              <DocTab key={name} type="button" $order={3 - i} $current={i === 0}>
                <TabBody $current={i === 0}>
                  <Glyph faded />
                  <TabLabel>{name}</TabLabel>
                </TabBody>
                <TabSlope current={i === 0} />
              </DocTab>
            ))}
            <CloseTab type="button" aria-label="关闭">
              <svg width="12" height="10" stroke="#444b55" strokeWidth="1.800">
                <path d="M1.500 1l9 8M10.500 1l-9 8" />
              </svg>
            </CloseTab>
          </TabStrip>
          <CanvasRow>
            <RelationCanvas />
            <Bar $vertical>
              <Arrow type="button" aria-label="向上" $vertical><Triangle d={UP} /></Arrow>
              <Thumb $vertical $size={21} />
              <Arrow type="button" aria-label="向下" $vertical $end><Triangle d={DOWN} /></Arrow>
            </Bar>
          </CanvasRow>
          <BarRow>
            <Bar $grow>
              <Arrow type="button" aria-label="向左"><Triangle d={LEFT} /></Arrow>
              <Thumb $size={132} />
              <Arrow type="button" aria-label="向右" $end><Triangle d={RIGHT} /></Arrow>
            </Bar>
            <BarCorner />
          </BarRow>
          <PaneDivider />
          <DesignGrid />
        </Document>
      </Workspace>
      <StatusBar>
        <StatusText>窗体视图</StatusText>
        <NumLock>数字</NumLock>
        <ViewButton type="button" aria-label="数据表视图">
          <svg width="18" height="16" fill="none" stroke="#666">
            <path d="M.5.5h16v15H.5zM5.500 1v14M1 3.500h15M8 7.500h6M8 10.500h6" />
          </svg>
        </ViewButton>
        <ViewButton type="button">SQL</ViewButton>
        <ViewButton type="button" aria-label="设计视图" $pressed>
          <svg width="18" height="16" fill="none" stroke="#555">
            <path d="M1.500 9.500h15v5h-15zM4.500 12v2M7.500 12v2M10.500 12v2M13.500 12v2" />
            <path strokeWidth="2" d="M8 8l7-7" />
            <path d="M2 7V1l5 6z" />
          </svg>
        </ViewButton>
        <Watermark>CSDN @十三先生po</Watermark>
      </StatusBar>
    </Window>
  </ThemeProvider>
);

export default App;
